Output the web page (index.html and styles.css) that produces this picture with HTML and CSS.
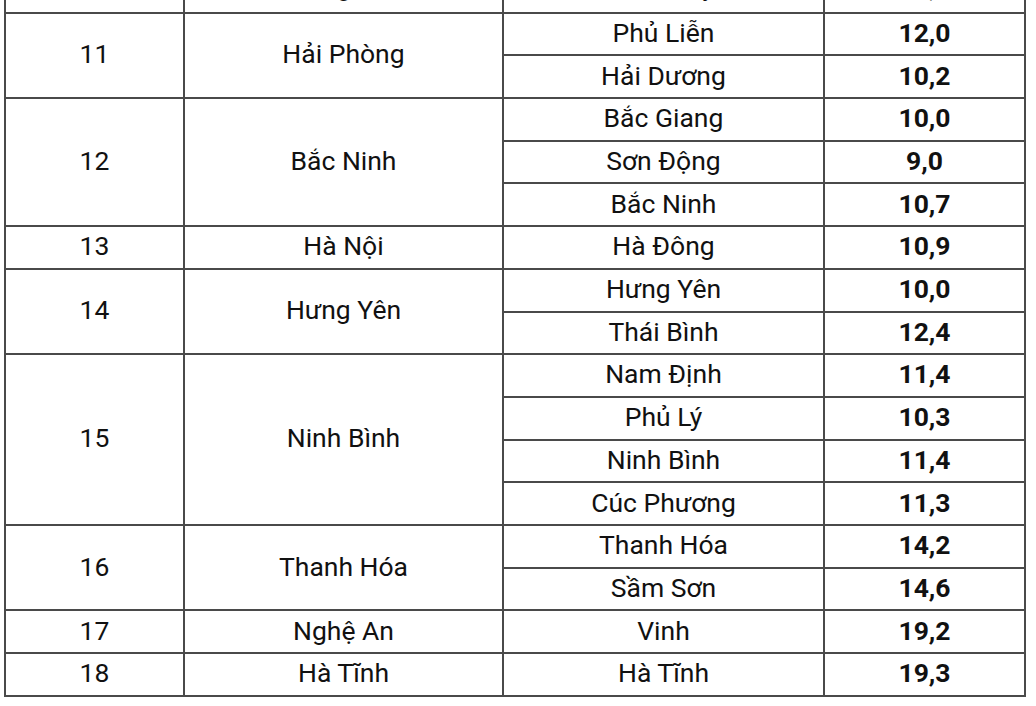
FILE: index.html
```html
<!DOCTYPE html>
<html lang="vi">
<head>
<meta charset="utf-8">
<link rel="stylesheet" href="styles.css">
</head>
<body>
<div class="frame">
<table class="data">
  <colgroup>
    <col class="c1"><col class="c2"><col class="c3"><col class="c4">
  </colgroup>
  <tbody>
    <tr class="cut"><td>10</td><td>Quảng Ninh</td><td>Bãi Cháy</td><td class="v">16,7</td></tr>
    <tr><td rowspan="2">11</td><td rowspan="2">Hải Phòng</td><td>Phủ Liễn</td><td class="v">12,0</td></tr>
    <tr><td>Hải Dương</td><td class="v">10,2</td></tr>
    <tr><td rowspan="3">12</td><td rowspan="3">Bắc Ninh</td><td>Bắc Giang</td><td class="v">10,0</td></tr>
    <tr><td>Sơn Động</td><td class="v">9,0</td></tr>
    <tr><td>Bắc Ninh</td><td class="v">10,7</td></tr>
    <tr><td>13</td><td>Hà Nội</td><td>Hà Đông</td><td class="v">10,9</td></tr>
    <tr><td rowspan="2">14</td><td rowspan="2">Hưng Yên</td><td>Hưng Yên</td><td class="v">10,0</td></tr>
    <tr><td>Thái Bình</td><td class="v">12,4</td></tr>
    <tr><td rowspan="4">15</td><td rowspan="4">Ninh Bình</td><td>Nam Định</td><td class="v">11,4</td></tr>
    <tr><td>Phủ Lý</td><td class="v">10,3</td></tr>
    <tr><td>Ninh Bình</td><td class="v">11,4</td></tr>
    <tr><td>Cúc Phương</td><td class="v">11,3</td></tr>
    <tr><td rowspan="2">16</td><td rowspan="2">Thanh Hóa</td><td>Thanh Hóa</td><td class="v">14,2</td></tr>
    <tr><td>Sầm Sơn</td><td class="v">14,6</td></tr>
    <tr><td>17</td><td>Nghệ An</td><td>Vinh</td><td class="v">19,2</td></tr>
    <tr><td>18</td><td>Hà Tĩnh</td><td>Hà Tĩnh</td><td class="v">19,3</td></tr>
  </tbody>
</table>
</div>
</body>
</html>
```
FILE: styles.css
```css
html, body {
  margin: 0;
  padding: 0;
  background: #ffffff;
}
.frame {
  height: 706px;
  overflow: hidden;
}
.data {
  margin-top: -31px;
  margin-left: 4px;
  width: 1020px;
  border-collapse: collapse;
  table-layout: fixed;
  font-family: Roboto, "Noto Sans", sans-serif;
  font-size: 26.5px;
  color: #111111;
}
.c1 { width: 179px; }
.c2 { width: 319px; }
.c3 { width: 321px; }
.c4 { width: 201px; }
.data tr { height: 42.7px; }
.data td {
  border: 2px solid #4a4a4a;
  text-align: center;
  vertical-align: middle;
  padding: 0 4px 3px;
  line-height: 1.1;
}
.data tr.cut td {
  padding-bottom: 10px;
}
.data td.v {
  font-weight: 700;
}
```
